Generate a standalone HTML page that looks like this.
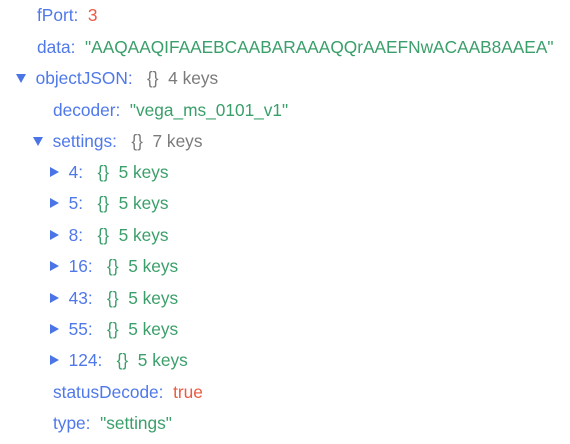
<!DOCTYPE html><html><head><style>
body{margin:0;width:570px;height:444px;background:#fff;font-family:"Liberation Sans",sans-serif;font-size:17.3px;position:relative;overflow:hidden}
.r{position:absolute;white-space:pre;line-height:20px}
.k{color:#4f78ea}.s{color:#3a9f6a}.n{color:#ec5a41}.g{color:#7a7a7a}
.t{display:inline-block;width:0;height:0;vertical-align:middle;margin-top:-2px}
.d{border-left:5px solid transparent;border-right:5px solid transparent;border-top:9px solid #4b74e6}
.rt{border-top:5px solid transparent;border-bottom:5px solid transparent;border-left:9px solid #4b74e6}
</style></head><body>
<div class="r" style="left:37px;top:5px"><span class="k">fPort:</span>  <span class="n">3</span></div>
<div class="r" style="left:37px;top:37px"><span class="k">data:</span>  <span class="s">"AAQAAQIFAAEBCAABARAAAQQrAAEFNwACAAB8AAEA"</span></div>
<div class="r" style="left:16px;top:68px"><span class="t d"></span>  <span class="k">objectJSON:</span>   <span class="g">{}  4 keys</span></div>
<div class="r" style="left:53px;top:100px"><span class="k">decoder:</span>  <span class="s">"vega_ms_0101_v1"</span></div>
<div class="r" style="left:33px;top:131px"><span class="t d"></span>  <span class="k">settings:</span>   <span class="g">{}  7 keys</span></div>
<div class="r" style="left:50px;top:162px"><span class="t rt"></span>  <span class="k">4:</span>   <span class="s">{}  5 keys</span></div>
<div class="r" style="left:50px;top:193px"><span class="t rt"></span>  <span class="k">5:</span>   <span class="s">{}  5 keys</span></div>
<div class="r" style="left:50px;top:225px"><span class="t rt"></span>  <span class="k">8:</span>   <span class="s">{}  5 keys</span></div>
<div class="r" style="left:50px;top:256px"><span class="t rt"></span>  <span class="k">16:</span>   <span class="s">{}  5 keys</span></div>
<div class="r" style="left:50px;top:288px"><span class="t rt"></span>  <span class="k">43:</span>   <span class="s">{}  5 keys</span></div>
<div class="r" style="left:50px;top:319px"><span class="t rt"></span>  <span class="k">55:</span>   <span class="s">{}  5 keys</span></div>
<div class="r" style="left:50px;top:350px"><span class="t rt"></span>  <span class="k">124:</span>   <span class="s">{}  5 keys</span></div>
<div class="r" style="left:53px;top:382px"><span class="k">statusDecode:</span>  <span class="n">true</span></div>
<div class="r" style="left:53px;top:413px"><span class="k">type:</span>  <span class="s">"settings"</span></div>
</body></html>
